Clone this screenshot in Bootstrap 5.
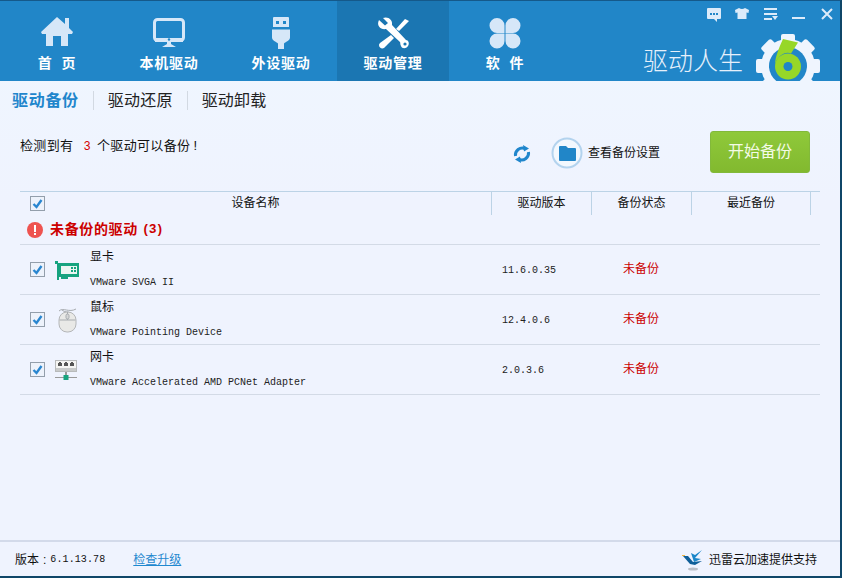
<!DOCTYPE html>
<html lang="zh-CN">
<head>
<meta charset="utf-8">
<title>驱动人生</title>
<link href="https://cdn.jsdelivr.net/npm/bootstrap@5.3.0/dist/css/bootstrap.min.css" rel="stylesheet">
<style>
html,body{margin:0;height:578px;overflow:hidden;background:#0f4668}
body{font-family:"Liberation Sans","Noto Sans CJK SC",sans-serif;font-size:12px;color:#111}
.dr-win{width:841px;height:577px;background:linear-gradient(#eff7ff 0,#eff3fe 200px);border-top:1px solid #15598a;border-right:1px solid #0f4668;border-bottom:1px solid #0f4668;position:relative;overflow:hidden}
.dr-head{height:80px;background:#2186c8}
.dr-nav{width:112px;padding-top:15px;color:#fff;font-weight:700;font-size:14px;line-height:16px;letter-spacing:.7px}
.dr-nav:first-child{margin-left:1px}
.dr-nav.dr-on{background:#1b76b2}
.dr-nav svg{display:block;height:34px;width:40px;margin-bottom:5px}
.dr-pair{gap:9px}
.dr-ctrl{position:absolute;top:6px;left:0;width:841px;height:18px}
.dr-ctrl svg{position:absolute;top:0}
.dr-brand{position:absolute;left:643px;top:41px;font-size:25px;line-height:34px;color:#e6f0fb;font-weight:300;font-family:"Noto Sans CJK SC",sans-serif}
.dr-gear{position:absolute;left:752px;top:29px}
.dr-tabs{height:39px;padding-left:12px;font-size:16px;color:#222}
.dr-tab{line-height:20px;letter-spacing:.2px}
.dr-tab.dr-on{color:#1f86cc;font-weight:700;letter-spacing:.7px}
.dr-sep{width:1px;height:19px;background:#d2d9e2;margin:0 14px}
.dr-info{height:71px;padding:0 0 0 20px}
.dr-count{font-size:13px;line-height:16px;padding-top:18px;letter-spacing:.35px}
.dr-count i{font-style:normal;color:#d40000;font-family:"Liberation Mono",monospace;font-size:12px;margin:0 6px 0 10px}
.dr-count b{font-weight:400;margin-left:3px}
.dr-refresh{position:absolute;left:512px;top:143px}
.dr-setting{position:absolute;left:551px;top:136px;line-height:32px}
.dr-setting span{margin-left:5px}
.dr-start{position:absolute;left:710px;top:130px;width:100px;height:42px;padding:0;border-radius:3px;border:1px solid #82b93a;background:linear-gradient(#8fc93a,#82b92f);color:#f4fbe6;font-size:16px;line-height:38px}
.dr-start:hover{background:#82b92f;color:#fff;border-color:#82b93a}
.dr-table{width:800px;margin-left:20px}
.dr-thead{height:24px;border-top:1px solid #bcd3e6;line-height:22px}
.dr-thead>div{text-align:center;height:23px}
.dr-c1{width:471px;flex:none;position:relative}
.dr-c2,.dr-c3{width:100px;flex:none;border-left:1px solid #bcd3e6}
.dr-c4{width:120px;flex:none;border-left:1px solid #bcd3e6;border-right:1px solid #bcd3e6}
.form-check-input.dr-check{width:15px;height:15px;margin:0;border:1px solid #939eab;border-radius:0;background-color:#edf2fb;background-size:13px 13px;background-image:url("data:image/svg+xml,%3Csvg xmlns='http://www.w3.org/2000/svg' viewBox='0 0 13 13'%3E%3Cpath d='M2.5 7l3 3 5-7' fill='none' stroke='%232a86d0' stroke-width='2.4'/%3E%3C/svg%3E");flex:none}
.dr-thead .dr-check{position:absolute;left:10px;top:4px}
.dr-group{height:30px;padding-left:7px;border-bottom:1px solid #d3dae6;color:#cc0000;font-weight:700;font-size:14px;letter-spacing:.65px}
.dr-group svg{margin-right:7px}
.dr-group i{font-style:normal;font-family:"Liberation Mono",monospace;font-size:13px;letter-spacing:-.9px;margin-left:4px}
.dr-row{height:50px;border-bottom:1px solid #d3dae6}
.dr-row .dr-check{margin-left:10px}
.dr-row svg{margin:0 10px 0 9px;flex:none}
.dr-name{line-height:14px;width:401px}
.dr-name small{display:block;font-family:"Liberation Mono",monospace;font-size:10px;color:#222;line-height:12px;margin-top:13px}
.dr-ver{width:100px;padding:2px 0 0 11px;font-family:"Liberation Mono",monospace;font-size:10px;color:#222}
.dr-state{width:100px;text-align:center;color:#cc0000;padding-bottom:2px}
.dr-foot{position:absolute;left:0;right:0;top:539px;height:37px;border-top:2px solid #d3daea;padding:0 23px 0 15px}
.dr-foot .dr-num{font-family:"Liberation Mono",monospace;font-size:10px;letter-spacing:.1px}
.dr-colon{margin:0 4px 0 4px}
.dr-link{color:#1f88cf;margin-left:28px}
.dr-bird{margin-right:5px}
</style>
</head>
<body>
<div class="dr-win">
  <div class="dr-head d-flex">
    <div class="dr-nav d-flex flex-column align-items-center">
      <svg viewBox="0 0 40 34"><path fill="#d6e7f8" d="M20 1 L28 8 V2 h4 V12 L36 16 L35 18 H31 V30 H24 V20 H16 V30 H9 V18 H5 L4 16 Z"/></svg>
      <div class="d-flex dr-pair"><span>首</span><span>页</span></div>
    </div>
    <div class="dr-nav d-flex flex-column align-items-center">
      <svg viewBox="0 0 40 34"><rect x="5.500" y="3.500" width="29" height="21" rx="3" fill="none" stroke="#d6e7f8" stroke-width="3"/><rect x="6" y="22" width="28" height="4" fill="#d6e7f8"/><circle cx="20" cy="23.500" r="1.200" fill="#2186c8"/><path fill="#d6e7f8" d="M18 26h4v2l5 3H13l5-3z"/></svg>
      <div>本机驱动</div>
    </div>
    <div class="dr-nav d-flex flex-column align-items-center">
      <svg viewBox="0 0 40 34"><path fill="#d6e7f8" d="M13 1h14a1 1 0 0 1 1 1v11h-16V2a1 1 0 0 1 1-1z"/><rect x="15" y="5" width="3" height="3" fill="#2186c8"/><rect x="22" y="5" width="3" height="3" fill="#2186c8"/><path fill="#d6e7f8" d="M11 13.500h18v8c0 3-4 4-6 6V33h-6v-5.500c-2-2-6-3-6-6z"/><rect x="12" y="11" width="16" height="2" fill="#2186c8"/></svg>
      <div>外设驱动</div>
    </div>
    <div class="dr-nav dr-on d-flex flex-column align-items-center">
      <svg viewBox="0 0 40 34"><path fill="#fff" d="M6 4 L12 9.500 L15 7 L10 2 C15 0 20 4 19 9 L33 24 C35 24 37 27 35 30 C33 33 29 33 28 30 C27 28 27.500 27 27 26 L13 13 C8 14 3 10 6 4Z"/><path fill="#fff" d="M32 3 L36 5 L26 15 L23 13Z M18 19 L21 22 L11 32 C9 33 6 32 6 29 C6 28 7 27 7 27Z"/><circle cx="32" cy="28" r="1.600" fill="#1b76b2"/></svg>
      <div>驱动管理</div>
    </div>
    <div class="dr-nav d-flex flex-column align-items-center">
      <svg viewBox="0 0 40 34"><path fill="#d6e7f8" d="M12 2a7.500 7.500 0 0 0 0 15h7.500V9.500A7.500 7.500 0 0 0 12 2zM28 2a7.500 7.500 0 0 1 0 15h-7.500V9.500A7.500 7.500 0 0 1 28 2zM12 32.500a7.500 7.500 0 0 1 0-15h7.500V25A7.500 7.500 0 0 1 12 32.500zM28 32.500a7.500 7.500 0 0 0 0-15h-7.500V25A7.500 7.500 0 0 0 28 32.500z"/></svg>
      <div class="d-flex dr-pair"><span>软</span><span>件</span></div>
    </div>
  </div>

  <div class="dr-ctrl">
    <svg style="left:706px" width="16" height="16" viewBox="0 0 16 16"><path fill="#dcebfa" d="M2 1h12a1 1 0 0 1 1 1v9a1 1 0 0 1-1 1h-3v3l-3-3H2a1 1 0 0 1-1-1V2a1 1 0 0 1 1-1z"/><path fill="#2186c8" d="M4 6h2v2H4zM7 6h2v2H7zM10 6h2v2h-2z"/></svg>
    <svg style="left:734px" width="16" height="14" viewBox="0 0 16 14"><path fill="#dcebfa" d="M5 1 Q8 3 11 1 L15 3 L14.500 6 L12.500 5.500 V12 H3.500 V5.500 L1.500 6 L1 3Z"/></svg>
    <svg style="left:763px" width="16" height="14" viewBox="0 0 16 14"><path fill="#dcebfa" d="M1 1h13v2H1zM1 6h13v2H1zM1 11h8v2H1zM9 9h6l-3 4z"/></svg>
    <svg style="left:791px" width="15" height="14" viewBox="0 0 15 14"><rect x="1" y="10" width="13" height="2" fill="#dcebfa"/></svg>
    <svg style="left:820px" width="14" height="14" viewBox="0 0 14 14"><path stroke="#dcebfa" stroke-width="2" d="M2 2l10 10M12 2L2 12"/></svg>
  </div>

  <div class="dr-brand">驱动人生</div>
  <svg class="dr-gear" width="72" height="72" viewBox="0 0 72 72">
    <g fill="#eff5fe">
      <circle cx="36" cy="36" r="27"/>
      <rect x="29" y="4" width="14" height="12" rx="2"/>
      <rect x="29" y="4" width="14" height="12" rx="2" transform="rotate(45 36 36)"/>
      <rect x="29" y="4" width="14" height="12" rx="2" transform="rotate(90 36 36)"/>
      <rect x="29" y="4" width="14" height="12" rx="2" transform="rotate(135 36 36)"/>
      <rect x="29" y="4" width="14" height="12" rx="2" transform="rotate(180 36 36)"/>
      <rect x="29" y="4" width="14" height="12" rx="2" transform="rotate(225 36 36)"/>
      <rect x="29" y="4" width="14" height="12" rx="2" transform="rotate(270 36 36)"/>
      <rect x="29" y="4" width="14" height="12" rx="2" transform="rotate(315 36 36)"/>
    </g>
    <path fill="#2186c8" d="M24.300 51 A19 19 0 1 1 47.700 51Z"/>
    <path fill="#97d728" d="M31 9 L46 12.500 L39 23.500 C33 21 26 26 23 34 C23.500 26 27 18 31 9Z"/>
    <circle cx="36" cy="36.500" r="13" fill="#97d728"/>
    <circle cx="36" cy="36.500" r="4.500" fill="#2186c8"/>
  </svg>

  <div class="dr-tabs d-flex align-items-center">
    <div class="dr-tab dr-on">驱动备份</div><div class="dr-sep"></div>
    <div class="dr-tab">驱动还原</div><div class="dr-sep"></div>
    <div class="dr-tab">驱动卸载</div>
  </div>

  <div class="dr-info">
    <div class="dr-count">检测到有<i>3</i>个驱动可以备份<b>!</b></div>
  </div>
  <svg class="dr-refresh" width="20" height="20" viewBox="0 0 20 20"><path fill="none" stroke="#1f86cc" stroke-width="3" d="M3.500 12A7 7 0 0 1 13 4.500M16.500 8A7 7 0 0 1 7 15.500"/><path fill="#1f86cc" d="M11 1l6 3.500-5 3zM9 19l-6-3.500 5-3z"/></svg>
  <div class="dr-setting d-flex align-items-center">
    <svg width="32" height="32" viewBox="0 0 32 32"><circle cx="16" cy="16" r="14.500" fill="#f2f8fe" stroke="#b3d3ee" stroke-width="2"/><path fill="#2186c8" d="M8 10a1 1 0 0 1 1-1h6l2 2h7a1 1 0 0 1 1 1v11a1 1 0 0 1-1 1H9a1 1 0 0 1-1-1z"/></svg>
    <span>查看备份设置</span>
  </div>
  <button type="button" class="btn dr-start">开始备份</button>

  <div class="dr-table">
    <div class="dr-thead d-flex">
      <div class="dr-c1"><input class="form-check-input dr-check" type="checkbox" checked>设备名称</div>
      <div class="dr-c2">驱动版本</div>
      <div class="dr-c3">备份状态</div>
      <div class="dr-c4">最近备份</div>
    </div>
    <div class="dr-group d-flex align-items-center">
      <svg width="16" height="16" viewBox="0 0 16 16"><circle cx="8" cy="8" r="8" fill="#ee5350"/><rect x="7" y="3" width="2" height="7" fill="#fff"/><rect x="7" y="11" width="2" height="2" fill="#fff"/></svg>
      未备份的驱动<i>(3)</i>
    </div>

    <div class="dr-row d-flex align-items-center">
      <input class="form-check-input dr-check" type="checkbox" checked>
      <svg width="26" height="24" viewBox="0 0 26 24"><path fill="#16a37f" d="M1 3h3v2h21v14H14v2H7v-2H5v3H3V6H1z"/><rect x="7" y="8" width="16" height="8" fill="#eaf5f2"/><path fill="#16a37f" d="M17 9h2v2h-2zM20 9h2v2h-2zM17 12h2v2h-2zM20 12h2v2h-2z"/></svg>
      <div class="dr-name">显卡<small>VMware SVGA II</small></div>
      <div class="dr-ver">11.6.0.35</div>
      <div class="dr-state">未备份</div>
    </div>
    <div class="dr-row d-flex align-items-center">
      <input class="form-check-input dr-check" type="checkbox" checked>
      <svg width="26" height="26" viewBox="0 0 26 26"><path fill="none" stroke="#a7abaf" d="M5 4c4-4 10 2 17-2M8 3c3 3 6 1 8 3"/><rect x="5" y="5" width="17" height="20" rx="8" fill="#e9e9e7" stroke="#b4b6b8"/><path stroke="#a7abaf" fill="none" d="M5.500 13h16M13.500 5v8"/><rect x="12" y="7" width="3" height="5" rx="1.500" fill="#d6d7d7" stroke="#a7abaf"/></svg>
      <div class="dr-name">鼠标<small>VMware Pointing Device</small></div>
      <div class="dr-ver">12.4.0.6</div>
      <div class="dr-state">未备份</div>
    </div>
    <div class="dr-row d-flex align-items-center">
      <input class="form-check-input dr-check" type="checkbox" checked>
      <svg width="26" height="24" viewBox="0 0 26 24"><rect x="1.500" y="2.500" width="21" height="11" fill="#f5f5f3" stroke="#b8babb"/><rect x="2" y="10" width="20" height="3" fill="#c9cbcb"/><path fill="#555" d="M4 5h1v-1h2v1h1v3h-4zM10 5h1v-1h2v1h1v3h-4zM16 5h1v-1h2v1h1v3h-4z"/><rect x="11" y="14" width="2" height="4" fill="#999"/><rect x="1" y="19" width="22" height="1" fill="#999"/><rect x="9.500" y="17" width="5" height="5" fill="#17a37f"/></svg>
      <div class="dr-name">网卡<small>VMware Accelerated AMD PCNet Adapter</small></div>
      <div class="dr-ver">2.0.3.6</div>
      <div class="dr-state">未备份</div>
    </div>
  </div>

  <div class="dr-foot d-flex align-items-center">
    <span>版本</span><span class="dr-colon">:</span><span class="dr-num">6.1.13.78</span>
    <a class="dr-link" href="#">检查升级</a>
    <div class="ms-auto d-flex align-items-center">
      <svg class="dr-bird" width="22" height="22" viewBox="0 0 22 22"><path fill="#1b87c9" d="M20 1 L13 6 L9 4 L12 13 L19 10 L13 9 Z"/><path fill="#0f5f99" d="M1 7 L6 7 L11 13 L20 12 L13 16 L8 15 Z"/><path fill="#f2b542" d="M0 6h3v1H0z"/><ellipse cx="11" cy="20" rx="5" ry="1.500" fill="#b9bec6"/></svg>
      <span>迅雷云加速提供支持</span>
    </div>
  </div>
</div>
</body>
</html>
